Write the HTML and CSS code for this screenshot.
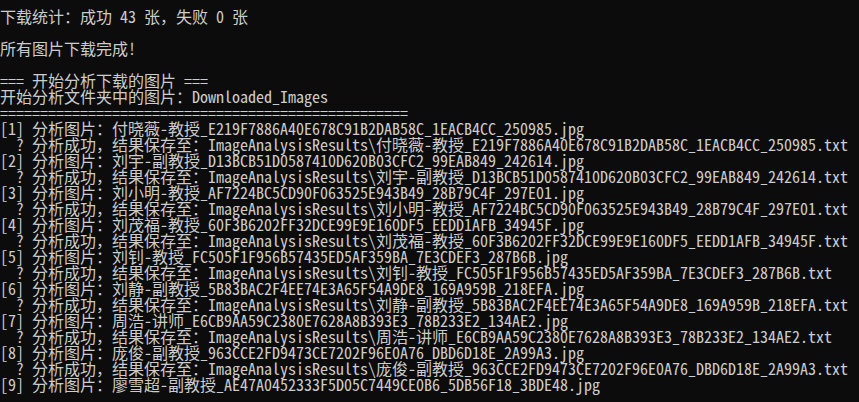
FILE: index.html
```html
<!DOCTYPE html>
<html lang="zh-CN">
<head>
    <meta charset="UTF-8">
    <meta name="viewport" content="width=device-width, initial-scale=1.0">
    <title>图片下载与分析</title>
    <link rel="stylesheet" href="styles.css">
</head>
<body>
    <div class="console">
<pre class="output">下载统计：成功 43 张，失败 0 张

所有图片下载完成!

=== 开始分析下载的图片 ===
开始分析文件夹中的图片：Downloaded_Images
===================================================
[1] 分析图片：付晓薇-教授_E219F7886A40E678C91B2DAB58C_1EACB4CC_250985.jpg
  ? 分析成功，结果保存至：ImageAnalysisResults\付晓薇-教授_E219F7886A40E678C91B2DAB58C_1EACB4CC_250985.txt
[2] 分析图片：刘宇-副教授_D13BCB51D0587410D620B03CFC2_99EAB849_242614.jpg
  ? 分析成功，结果保存至：ImageAnalysisResults\刘宇-副教授_D13BCB51D0587410D620B03CFC2_99EAB849_242614.txt
[3] 分析图片：刘小明-教授_AF7224BC5CD90F063525E943B49_28B79C4F_297E01.jpg
  ? 分析成功，结果保存至：ImageAnalysisResults\刘小明-教授_AF7224BC5CD90F063525E943B49_28B79C4F_297E01.txt
[4] 分析图片：刘茂福-教授_60F3B6202FF32DCE99E9E160DF5_EEDD1AFB_34945F.jpg
  ? 分析成功，结果保存至：ImageAnalysisResults\刘茂福-教授_60F3B6202FF32DCE99E9E160DF5_EEDD1AFB_34945F.txt
[5] 分析图片：刘钊-教授_FC505F1F956B57435ED5AF359BA_7E3CDEF3_287B6B.jpg
  ? 分析成功，结果保存至：ImageAnalysisResults\刘钊-教授_FC505F1F956B57435ED5AF359BA_7E3CDEF3_287B6B.txt
[6] 分析图片：刘静-副教授_5B83BAC2F4EE74E3A65F54A9DE8_169A959B_218EFA.jpg
  ? 分析成功，结果保存至：ImageAnalysisResults\刘静-副教授_5B83BAC2F4EE74E3A65F54A9DE8_169A959B_218EFA.txt
[7] 分析图片：周浩-讲师_E6CB9AA59C2380E7628A8B393E3_78B233E2_134AE2.jpg
  ? 分析成功，结果保存至：ImageAnalysisResults\周浩-讲师_E6CB9AA59C2380E7628A8B393E3_78B233E2_134AE2.txt
[8] 分析图片：庞俊-副教授_963CCE2FD9473CE7202F96E0A76_DBD6D18E_2A99A3.jpg
  ? 分析成功，结果保存至：ImageAnalysisResults\庞俊-副教授_963CCE2FD9473CE7202F96E0A76_DBD6D18E_2A99A3.txt
[9] 分析图片：廖雪超-副教授_AE47A0452333F5D05C7449CE0B6_5DB56F18_3BDE48.jpg</pre>
    </div>
</body>
</html>
```

FILE: styles.css
```css
html, body {
    margin: 0;
    padding: 0;
    height: 100%;
    background-color: #0c0c0c;
    overflow: hidden;
}
.console {
    padding: 8px 0 0 0;
    height: 100%;
    box-sizing: border-box;
}
.output {
    margin: 0;
    font-family: "Noto Sans Mono CJK SC", "Liberation Mono", "Noto Sans CJK SC", monospace;
    font-size: 16px;
    line-height: 16px;
    color: #cccccc;
    white-space: pre;
}
```
